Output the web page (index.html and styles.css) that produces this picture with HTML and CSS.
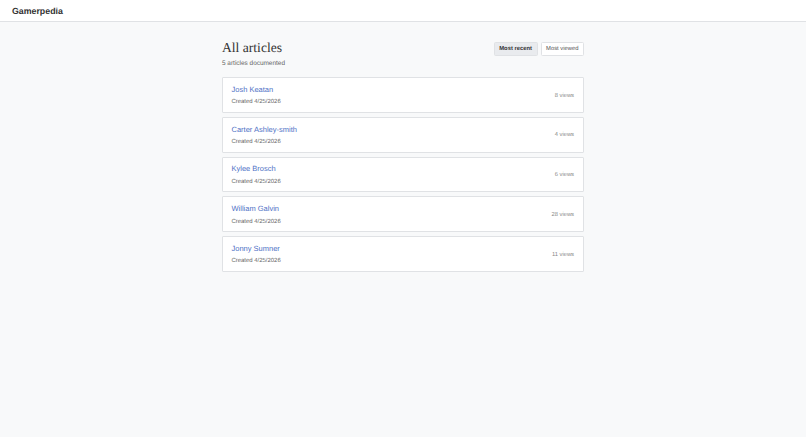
FILE: index.html
```html
<!DOCTYPE html>
<html lang="en">
<head>
<meta charset="utf-8">
<title>Gamerpedia</title>
<link rel="stylesheet" href="styles.css">
</head>
<body>
<header class="topbar"><span class="brand">Gamerpedia</span></header>
<main class="content">
  <div class="page-head">
    <div>
      <h1 class="title">All articles</h1>
      <p class="subtitle">5 articles documented</p>
    </div>
    <div class="sort">
      <button class="sort-btn active">Most recent</button>
      <button class="sort-btn">Most viewed</button>
    </div>
  </div>
  <ul class="list">
    <li class="card"><div><a class="name" href="#">Josh Keatan</a><div class="meta">Created 4/25/2026</div></div><span class="views">8 views</span></li>
    <li class="card"><div><a class="name" href="#">Carter Ashley-smith</a><div class="meta">Created 4/25/2026</div></div><span class="views">4 views</span></li>
    <li class="card"><div><a class="name" href="#">Kylee Brosch</a><div class="meta">Created 4/25/2026</div></div><span class="views">6 views</span></li>
    <li class="card"><div><a class="name" href="#">William Galvin</a><div class="meta">Created 4/25/2026</div></div><span class="views">28 views</span></li>
    <li class="card"><div><a class="name" href="#">Jonny Sumner</a><div class="meta">Created 4/25/2026</div></div><span class="views">11 views</span></li>
  </ul>
</main>
</body>
</html>
```
FILE: styles.css
```css
* { box-sizing: border-box; }
html, body { margin: 0; height: 100%; }
body {
  background: #f8f9fa;
  font-family: "Liberation Sans", Arial, sans-serif;
  color: #333;
  text-rendering: geometricPrecision;
}
.topbar {
  height: 22px;
  background: #fff;
  border-bottom: 1px solid #e0e2e5;
  padding: 0 12px;
  display: flex;
  align-items: center;
}
.brand { font-size: 8.8px; font-weight: 700; color: #333; }
.content { width: 362px; margin: 0 auto; padding-top: 18px; }
.page-head { display: flex; justify-content: space-between; align-items: flex-start; margin-bottom: 9px; }
.title {
  margin: 0;
  font-family: "Liberation Serif", serif;
  font-weight: 400;
  font-size: 13.6px;
  line-height: 16px;
  color: #333;
}
.subtitle { margin: 4px 0 0; font-size: 6.45px; line-height: 8px; color: #666; }
.sort { display: flex; gap: 3px; margin-top: 2px; }
.sort-btn {
  height: 13.5px;
  padding: 0 4.5px;
  border: 1px solid #e0e2e5;
  border-radius: 1.5px;
  background: #fff;
  color: #555;
  font: 400 5.85px "Liberation Sans", Arial, sans-serif;
  text-rendering: geometricPrecision;
}
.sort-btn.active { background: #e9ebee; font-weight: 700; color: #333; }
.list { list-style: none; margin: 0; padding: 0; display: flex; flex-direction: column; gap: 4px; }
.card {
  height: 35.75px;
  background: #fff;
  border: 1px solid #e0e2e5;
  border-radius: 1px;
  padding: 1.5px 9px 0 8.5px;
  display: flex;
  justify-content: space-between;
  align-items: center;
}
.name { display: block; font-size: 7.5px; line-height: 10px; color: #4f72c6; text-decoration: none; }
.meta { margin-top: 3.5px; font-size: 5.95px; line-height: 8px; color: #666; }
.views { font-size: 5.8px; color: #888; }
```
